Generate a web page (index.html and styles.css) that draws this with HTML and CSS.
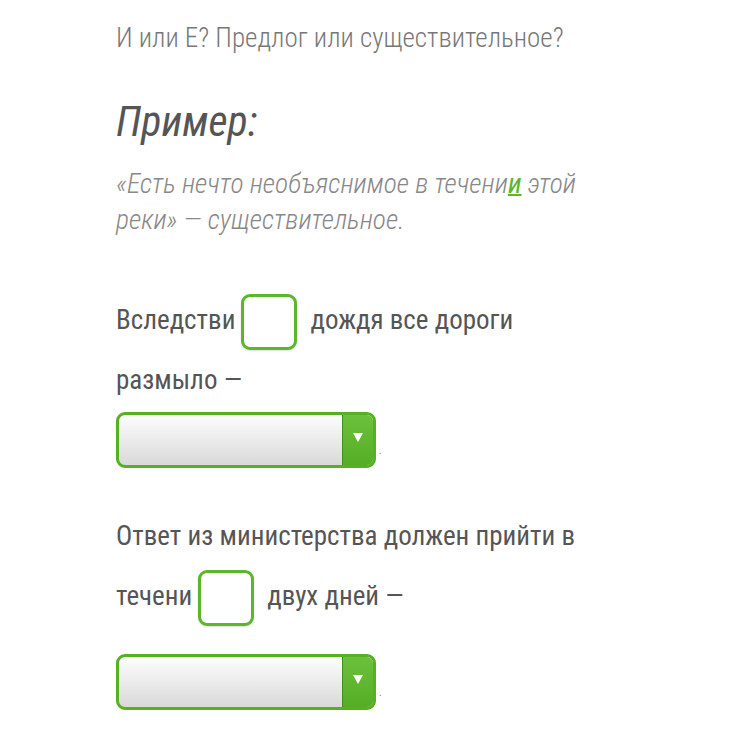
FILE: index.html
```html
<!DOCTYPE html>
<html lang="ru">
<head>
    <meta charset="UTF-8">
    <meta name="viewport" content="width=device-width, initial-scale=1.0">
    <title>И или Е?</title>
    <link rel="stylesheet" href="styles.css">
</head>
<body>
    <div class="page">
        <p class="lead">И или Е? Предлог или существительное?</p>

        <h2 class="example-title">Пример:</h2>
        <p class="example">«Есть нечто необъяснимое в течени<span class="mark">и</span> этой реки» — существительное.</p>

        <div class="task">
            <p class="sentence">Вследстви<span class="blank"></span>дождя все дороги размыло —</p>
            <div class="choice">
                <span class="select"><span class="select-btn"></span></span><span class="dot">.</span>
            </div>
        </div>

        <div class="task task-second">
            <p class="sentence">Ответ из министерства должен прийти в течени<span class="blank"></span>двух дней —</p>
            <div class="choice">
                <span class="select"><span class="select-btn"></span></span><span class="dot">.</span>
            </div>
        </div>
    </div>
</body>
</html>
```

FILE: styles.css
```css
body {
    margin: 0;
    background: #fff;
    font-family: "Roboto Condensed", Roboto, "Liberation Sans", sans-serif;
}
.page {
    width: 484px;
    padding: 18px 0 0 116px;
}
.lead {
    margin: 0;
    font-size: 27px;
    font-weight: 300;
    line-height: 40px;
    color: #777;
}
.example-title {
    margin: 40px 0 0;
    font-size: 42px;
    font-style: italic;
    font-weight: 400;
    line-height: 48px;
    color: #555;
}
.example {
    margin: 20px 0 0;
    font-size: 27.5px;
    font-style: italic;
    font-weight: 300;
    line-height: 36px;
    color: #888;
}
.mark {
    color: #5cb52a;
    font-weight: 400;
    text-decoration: underline;
    text-decoration-thickness: 2px;
}
.task {
    margin-top: 52px;
}
.task-second {
    margin-top: 36px;
}
.sentence {
    margin: 0;
    font-size: 27px;
    line-height: 60px;
    color: #555;
}
.blank {
    display: inline-block;
    width: 50px;
    height: 50px;
    margin: 0 13px 0 6px;
    vertical-align: middle;
    border: 3px solid #5cb52a;
    border-radius: 9px;
    background: #fff;
    box-shadow: 0 1px 2px rgba(0, 0, 0, 0.15);
}
.choice {
    display: flex;
    align-items: flex-end;
    height: 60px;
}
.task-second .choice {
    height: 86px;
}
.select {
    position: relative;
    display: block;
    width: 254px;
    height: 50px;
    border: 3px solid #56b022;
    border-radius: 9px;
    background: linear-gradient(#fdfdfd, #d9d9d9);
    overflow: hidden;
    margin-bottom: 2px;
}
.select-btn {
    position: absolute;
    top: 0;
    right: 0;
    width: 30px;
    height: 100%;
    border-left: 1px solid #3f8f18;
    background: linear-gradient(#6cc13c, #55ad25);
}
.select-btn::after {
    content: "";
    position: absolute;
    left: 10px;
    top: 18px;
    border-left: 5px solid transparent;
    border-right: 5px solid transparent;
    border-top: 9px solid #fff;
}
.dot {
    font-size: 10px;
    line-height: 1;
    color: #777;
    margin: 0 0 14px 3px;
}
```
